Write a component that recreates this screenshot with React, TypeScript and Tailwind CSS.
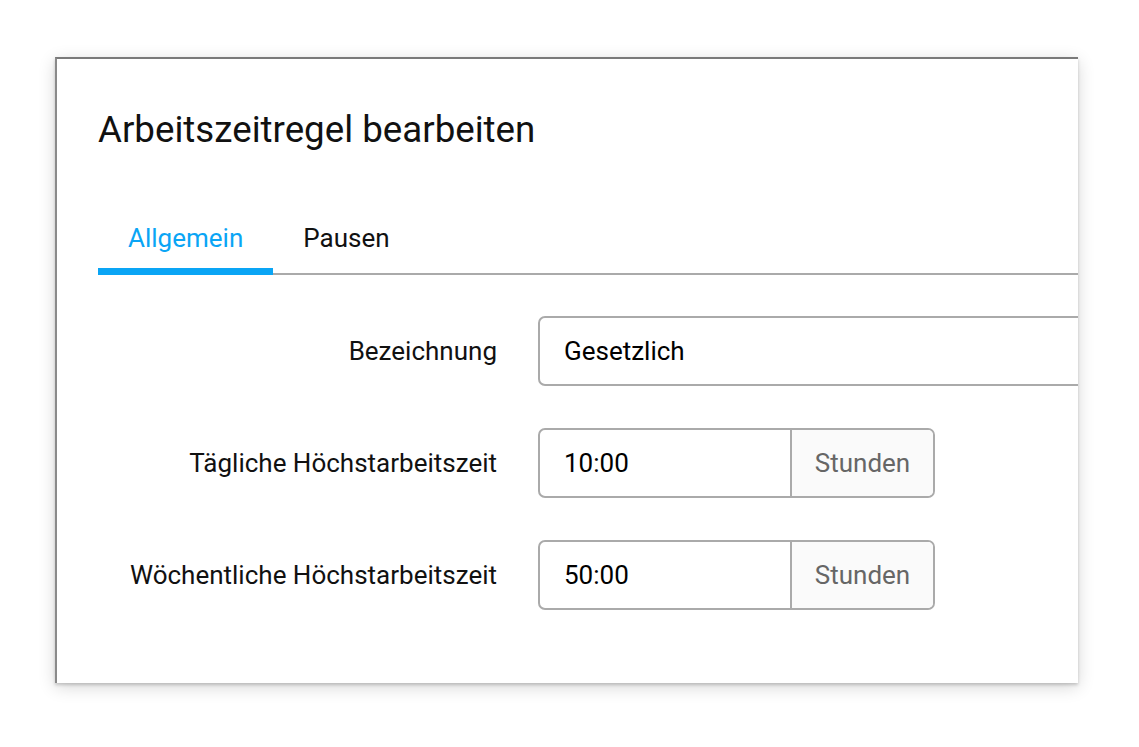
import { useState } from "react";

type Row = { label: string; value: string; unit?: string };

const rows: Row[] = [
  { label: "Bezeichnung", value: "Gesetzlich" },
  { label: "Tägliche Höchstarbeitszeit", value: "10:00", unit: "Stunden" },
  { label: "Wöchentliche Höchstarbeitszeit", value: "50:00", unit: "Stunden" },
];

const tabs = ["Allgemein", "Pausen"];

export default function App() {
  const [active, setActive] = useState(0);

  return (
    <div
      className="h-[747px] w-[1139px] overflow-hidden bg-white pl-[55px] pt-[57px]"
      style={{ fontFamily: "Roboto, 'Noto Sans', sans-serif" }}
    >
      <div className="h-[626px] w-[1023px] overflow-hidden border-l-2 border-t-2 border-l-[#8a8a8a] border-t-[#7a7a7a] bg-white pl-[41px] pt-[50px] shadow-[0_2px_3px_rgba(0,0,0,0.18),0_4px_16px_rgba(0,0,0,0.16)]">
        <h1 className="text-[36.7px] leading-[42px] font-normal text-[#111]">Arbeitszeitregel bearbeiten</h1>

        <div className="mt-[57px] flex border-b-2 border-[#aaa]">
          {tabs.map((tab, i) => (
            <button
              key={tab}
              onClick={() => setActive(i)}
              className={
                i === active
                  ? "-mb-[2px] border-b-[7px] border-[#0aa5f5] px-[30px] pt-[15px] pb-[15px] text-[26px] leading-[30px] text-[#0aa5f5]"
                  : "-mb-[2px] border-b-[7px] border-transparent px-[30px] pt-[15px] pb-[15px] text-[26px] leading-[30px] text-[#111]"
              }
            >
              {tab}
            </button>
          ))}
        </div>

        <div className="mt-[41px] grid grid-cols-[399px_1fr] items-center gap-x-[41px] gap-y-[42px] text-[26px]">
          {rows.map((row) => (
            <div key={row.label} className="contents">
              <label className="text-right text-[#111]">{row.label}</label>
              {row.unit ? (
                <div className="flex h-[70px] w-[397px] overflow-hidden rounded-[7px] border-2 border-[#aaa]">
                  <div className="flex w-[250px] items-center pl-[24px] text-black">{row.value}</div>
                  <div className="flex flex-1 items-center justify-center border-l-2 border-[#aaa] bg-[#fafafa] text-[#666]">
                    {row.unit}
                  </div>
                </div>
              ) : (
                <div className="flex h-[70px] w-[620px] items-center rounded-[7px] border-2 border-[#aaa] pl-[24px] text-black">
                  {row.value}
                </div>
              )}
            </div>
          ))}
        </div>
      </div>
    </div>
  );
}
